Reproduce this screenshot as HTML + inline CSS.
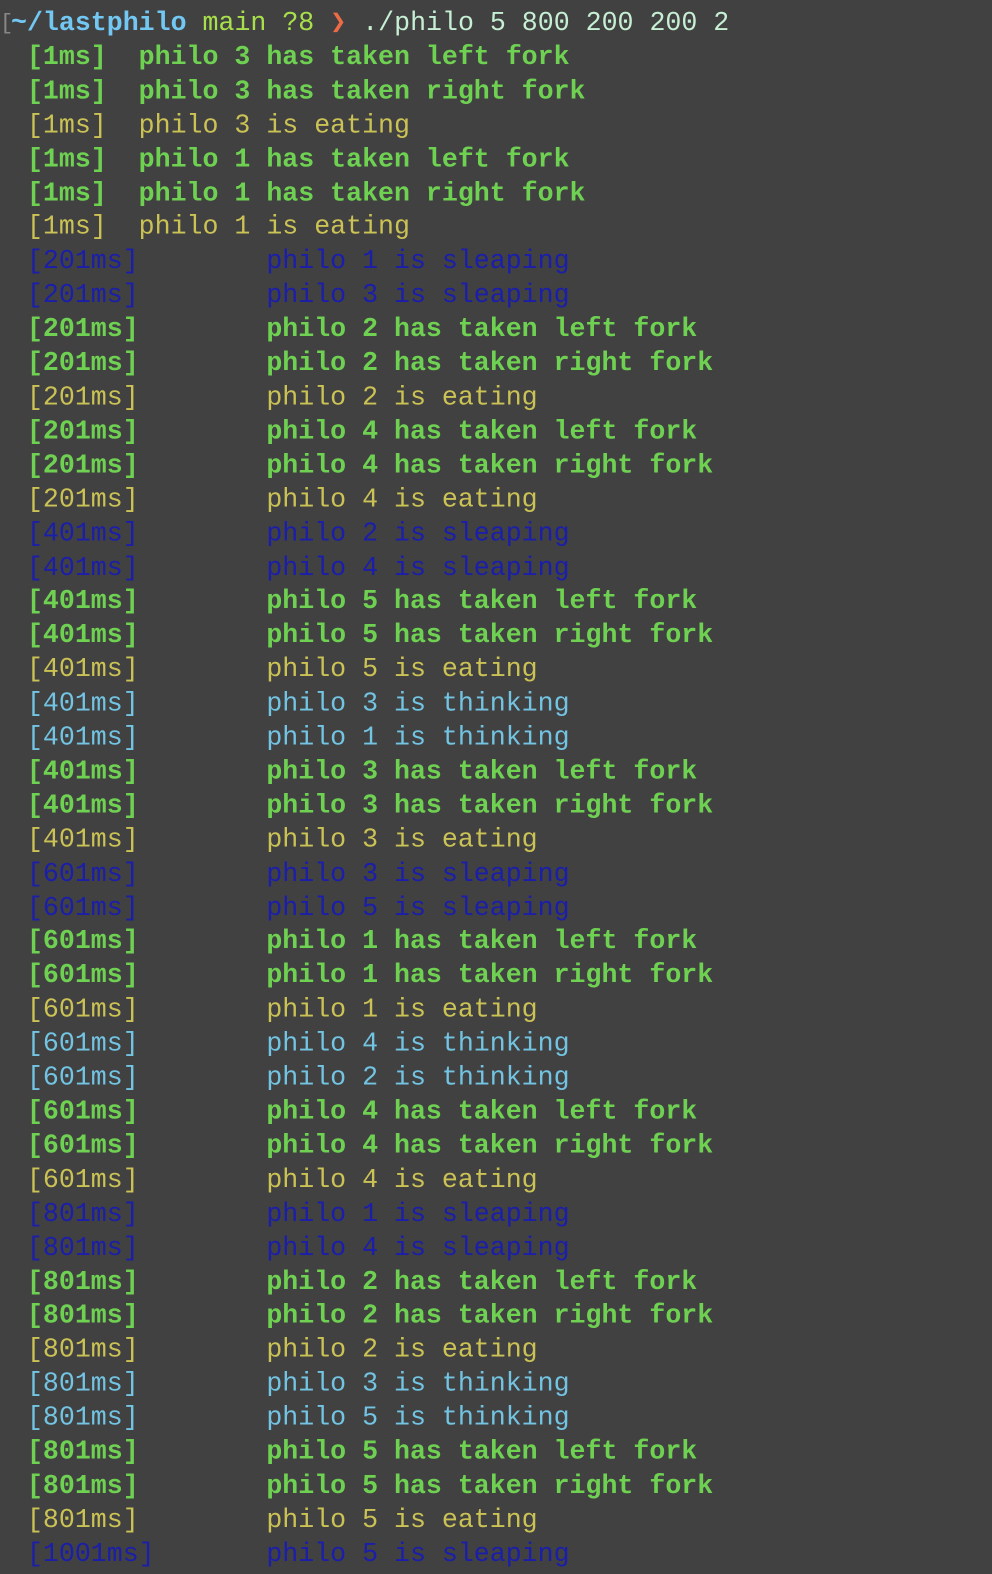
<!DOCTYPE html>
<html><head><meta charset="utf-8"><style>
html,body{margin:0;padding:0;background:#414141;width:992px;height:1574px;overflow:hidden}
pre{margin:0;padding:7px 0 0 11px;font-family:"Liberation Mono",monospace;font-size:26.6px;line-height:33.9px;white-space:pre;position:relative;transform:scaleY(1.0033);transform-origin:0 21px}
.g{color:#6fd152;font-weight:bold}
.y{color:#cbc255}
.b{color:#1a1eaa}
.c{color:#72c4e2}
.p{color:#72c8f2;font-weight:bold}
.m{color:#a8e04c}
.a{color:#ec6a45}
.w{color:#c6efd4}
.br{position:absolute;left:0;top:7px;color:#888;font-weight:normal;font-size:22px}
</style></head><body><pre><span class="br">[</span><span class="p">~/lastphilo</span> <span class="m">main ?8</span> <span class="a">❯</span> <span class="w">./philo 5 800 200 200 2</span>
<span class="g"> [1ms]  philo 3 has taken left fork</span>
<span class="g"> [1ms]  philo 3 has taken right fork</span>
<span class="y"> [1ms]  philo 3 is eating</span>
<span class="g"> [1ms]  philo 1 has taken left fork</span>
<span class="g"> [1ms]  philo 1 has taken right fork</span>
<span class="y"> [1ms]  philo 1 is eating</span>
<span class="b"> [201ms]        philo 1 is sleaping</span>
<span class="b"> [201ms]        philo 3 is sleaping</span>
<span class="g"> [201ms]        philo 2 has taken left fork</span>
<span class="g"> [201ms]        philo 2 has taken right fork</span>
<span class="y"> [201ms]        philo 2 is eating</span>
<span class="g"> [201ms]        philo 4 has taken left fork</span>
<span class="g"> [201ms]        philo 4 has taken right fork</span>
<span class="y"> [201ms]        philo 4 is eating</span>
<span class="b"> [401ms]        philo 2 is sleaping</span>
<span class="b"> [401ms]        philo 4 is sleaping</span>
<span class="g"> [401ms]        philo 5 has taken left fork</span>
<span class="g"> [401ms]        philo 5 has taken right fork</span>
<span class="y"> [401ms]        philo 5 is eating</span>
<span class="c"> [401ms]        philo 3 is thinking</span>
<span class="c"> [401ms]        philo 1 is thinking</span>
<span class="g"> [401ms]        philo 3 has taken left fork</span>
<span class="g"> [401ms]        philo 3 has taken right fork</span>
<span class="y"> [401ms]        philo 3 is eating</span>
<span class="b"> [601ms]        philo 3 is sleaping</span>
<span class="b"> [601ms]        philo 5 is sleaping</span>
<span class="g"> [601ms]        philo 1 has taken left fork</span>
<span class="g"> [601ms]        philo 1 has taken right fork</span>
<span class="y"> [601ms]        philo 1 is eating</span>
<span class="c"> [601ms]        philo 4 is thinking</span>
<span class="c"> [601ms]        philo 2 is thinking</span>
<span class="g"> [601ms]        philo 4 has taken left fork</span>
<span class="g"> [601ms]        philo 4 has taken right fork</span>
<span class="y"> [601ms]        philo 4 is eating</span>
<span class="b"> [801ms]        philo 1 is sleaping</span>
<span class="b"> [801ms]        philo 4 is sleaping</span>
<span class="g"> [801ms]        philo 2 has taken left fork</span>
<span class="g"> [801ms]        philo 2 has taken right fork</span>
<span class="y"> [801ms]        philo 2 is eating</span>
<span class="c"> [801ms]        philo 3 is thinking</span>
<span class="c"> [801ms]        philo 5 is thinking</span>
<span class="g"> [801ms]        philo 5 has taken left fork</span>
<span class="g"> [801ms]        philo 5 has taken right fork</span>
<span class="y"> [801ms]        philo 5 is eating</span>
<span class="b"> [1001ms]       philo 5 is sleaping</span></pre></body></html>
